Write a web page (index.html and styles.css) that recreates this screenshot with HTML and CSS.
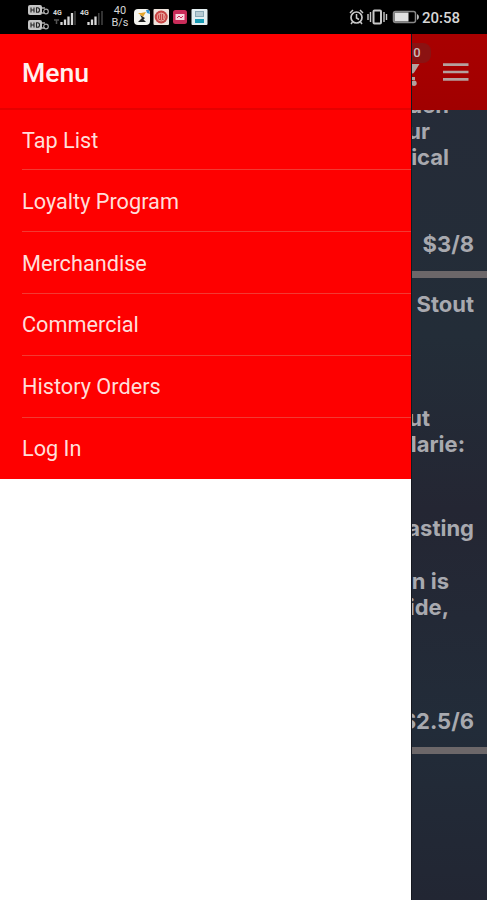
FILE: index.html
```
<!DOCTYPE html>
<html lang="en">
<head>
    <meta charset="UTF-8">
    <meta name="viewport" content="width=device-width, initial-scale=1.0">
    <title>Menu</title>
    <link rel="stylesheet" href="styles.css">
</head>
<body>
    <div class="status-bar">
        <div class="hd-icons">
            <svg width="21" height="10" viewBox="0 0 21 10">
                <rect x="0" y="0" width="14" height="10" rx="2" fill="#c4c4c4"/>
                <path d="M3 2.5v5M6 2.5v5M3 5h3M8.5 2.7h1q2 0 2 2.3t-2 2.3h-1z" stroke="#222" stroke-width="1.1" fill="none"/>
                <path d="M14 3h3M14 8h3" stroke="#aaa" stroke-width="1.5"/>
                <circle cx="18" cy="6.5" r="2.3" stroke="#aaa" stroke-width="1.2" fill="none"/>
            </svg>
            <svg width="21" height="10" viewBox="0 0 21 10">
                <rect x="0" y="0" width="14" height="10" rx="2" fill="#c4c4c4"/>
                <path d="M3 2.5v5M6 2.5v5M3 5h3M8.5 2.7h1q2 0 2 2.3t-2 2.3h-1z" stroke="#222" stroke-width="1.1" fill="none"/>
                <path d="M14 3h3M14 8h3" stroke="#aaa" stroke-width="1.5"/>
                <circle cx="18" cy="6.5" r="2.3" stroke="#aaa" stroke-width="1.2" fill="none"/>
            </svg>
        </div>
        <div class="signal">
            <span class="network">4G</span>
            <svg width="23" height="16" viewBox="0 0 23 16">
                <path d="M1 10h5M3.5 10v4" stroke="#555" stroke-width="1.5"/>
                <path d="M8.5 15v-3M12 15V9.5M15.5 15V6.5M19 15V3" stroke="#d8d8d8" stroke-width="2.3"/>
                <path d="M22 15V1" stroke="#444" stroke-width="1.5"/>
            </svg>
        </div>
        <div class="signal">
            <span class="network">4G</span>
            <svg width="23" height="16" viewBox="0 0 23 16">
                <path d="M8.5 15v-3M12 15V9.5M15.5 15V6.5" stroke="#d8d8d8" stroke-width="2.3"/>
                <path d="M18.8 15V3M22 15V1" stroke="#444" stroke-width="1.5"/>
            </svg>
        </div>
        <div class="speed"><span>40</span><span>B/s</span></div>
        <svg class="apps" width="74" height="16" viewBox="0 0 74 16">
            <rect x="0" y="0" width="16" height="16" rx="4" fill="#f5f5f0"/>
            <path d="M4 4l5 4 3-5-5 1z" fill="#e3a52c"/>
            <path d="M12 1h3l1 4-3-1z" fill="#2e91d2"/>
            <path d="M4 13l4-4 4 4zM6 6l5 3-2 2z" fill="#222"/>
            <rect x="19.5" y="0" width="15.5" height="16" rx="1" fill="#efe4dc"/>
            <circle cx="27.2" cy="8" r="6.5" fill="#c74444"/>
            <circle cx="27.2" cy="8" r="4" fill="none" stroke="#eba79e"/>
            <path d="M25.5 5v5M27.5 4v7M29.5 5v5" stroke="#eba79e" stroke-width=".8"/>
            <rect x="39" y="1" width="14" height="14" rx="2.5" fill="#c82c59"/>
            <path d="M41.5 5h9v6h-9z" fill="#f6d7df"/>
            <path d="M43 9l2-2 2 2 2-2" stroke="#c82c59" fill="none"/>
            <rect x="57.5" y="0" width="16" height="16" rx="1" fill="#e4eff1"/>
            <path d="M61 2h9v6h-9z" fill="#8aa8b5"/>
            <path d="M62 4h7M62 6h7" stroke="#e4eff1"/>
            <path d="M61 10h9v4h-9z" fill="#189bb4"/>
        </svg>
        <svg class="system-icons" width="72" height="18" viewBox="0 0 72 18">
            <g fill="none" stroke="#c9c9c9">
                <circle cx="7.5" cy="9.5" r="5.5" stroke-width="1.7"/>
                <path d="M7.5 6v4l2.5 1.500M1 5l3-3M14 5l-3-3M3.5 14l-1.5 2M11.5 14l1.5 2" stroke-width="1.5"/>
                <rect x="24.5" y="2.5" width="7.5" height="13" rx="1" stroke-width="2"/>
                <path d="M21.5 4v10M35 4v10M19 6v6M37.5 6v6" stroke-width="1.4"/>
                <rect x="44.5" y="3.5" width="22" height="11" rx="2" stroke="#888" stroke-width="1.5"/>
            </g>
            <rect x="45.5" y="4.5" width="14" height="9" fill="#e0e0e0"/>
            <path d="M68 6q2 1 2 3t-2 3z" fill="#bbb"/>
        </svg>
        <span class="clock">20:58</span>
    </div>

    <div class="screen">
        <nav class="drawer">
            <div class="drawer-header">Menu</div>
            <ul class="menu-list">
                <li>Tap List</li>
                <li>Loyalty Program</li>
                <li>Merchandise</li>
                <li>Commercial</li>
                <li>History Orders</li>
                <li>Log In</li>
            </ul>
        </nav>

        <main class="page">
            <div class="toolbar">
                <div class="cart">
                    <svg width="28" height="28" viewBox="0 0 28 28" fill="#b5a09e">
                        <path d="M2 3h4l1.5 3h20l-5 8q-.8 1.500-2.500 1.500H9.5L8 19h15v3H7q-3 0-2-3l2-3.500L3.5 6H2z"/>
                        <circle cx="9" cy="25.200" r="2.700"/>
                        <circle cx="22" cy="25.200" r="2.700"/>
                    </svg>
                    <span class="badge">0</span>
                </div>
                <svg class="burger" width="26" height="18" viewBox="0 0 26 18">
                    <path d="M0 1.7h25.500M0 9h25.500M0 16.3h25.500" stroke="#b5a09e" stroke-width="2.700"/>
                </svg>
            </div>
            <div class="content">
                <section class="beer beer-top">
                    <p class="indent-md">den</p>
                    <p class="indent-lg">ur</p>
                    <p class="indent-md">ical</p>
                    <p class="price">$3/8</p>
                </section>
                <section class="beer beer-stout">
                    <p class="style">Stout</p>
                    <p class="indent-lg">ut</p>
                    <p class="indent-xs">Marie:</p>
                    <p class="tasting">asting</p>
                    <p class="indent-md">n is</p>
                    <p class="indent-md">ide,</p>
                    <p class="price">$2.5/6</p>
                </section>
            </div>
        </main>
    </div>
</body>
</html>
```

FILE: styles.css
```
* {
    box-sizing: border-box;
}

body {
    margin: 0;
    height: 900px;
    display: flex;
    flex-direction: column;
    overflow: hidden;
    font-family: Roboto, sans-serif;
    background: #232834;
}

svg {
    flex-shrink: 0;
}

.status-bar {
    height: 34px;
    flex-shrink: 0;
    display: flex;
    align-items: center;
    padding-left: 28px;
    background: #000;
    color: #d6d6d6;
}

.hd-icons {
    display: flex;
    flex-direction: column;
    gap: 5px;
}

.signal {
    display: flex;
    flex-direction: column;
    margin-left: 4px;
    width: 23px;
}

.signal svg {
    margin-top: -7px;
}

.network {
    font-size: 7px;
    line-height: 8px;
    font-weight: 700;
}

.speed {
    display: flex;
    flex-direction: column;
    align-items: center;
    width: 18px;
    margin-left: 8px;
    font-size: 11px;
    line-height: 12px;
}

.apps {
    margin-left: 5px;
}

.system-icons {
    margin-left: auto;
}

.clock {
    width: 38px;
    margin: 1px 27px 0 1px;
    font-size: 15px;
    font-weight: 500;
    white-space: nowrap;
}

.screen {
    flex: 1;
    display: flex;
    min-height: 0;
}

.drawer {
    width: 411px;
    flex-shrink: 0;
    background: #fff;
}

.drawer-header {
    height: 76px;
    padding: 3px 22px 0;
    display: flex;
    align-items: center;
    background: #fe0000;
    border-bottom: 2px solid #e50000;
    color: #fff0ee;
    font-size: 26.6px;
    font-weight: 500;
}

.menu-list {
    list-style: none;
    margin: 0;
    padding: 0 0 0 22px;
    background: #fe0000;
}

.menu-list li {
    height: 61.8px;
    display: flex;
    align-items: center;
    padding-top: 1px;
    border-bottom: 1px solid #f23a32;
    color: #ffdeda;
    font-size: 21.7px;
}

.menu-list li:first-child {
    height: 60.4px;
}

.menu-list li:last-child {
    height: 61.4px;
    padding-top: 0;
    border-bottom: none;
}

.page {
    flex: 1;
    min-width: 0;
    display: flex;
    flex-direction: column;
    overflow: hidden;
    border-left: 1px solid #151820;
    background: linear-gradient(#262b38, #232d38 35%, #242633 55%, #222c39 80%, #222633);
}

.toolbar {
    height: 76px;
    flex-shrink: 0;
    display: flex;
    align-items: center;
    justify-content: flex-end;
    padding-right: 18px;
    background: linear-gradient(#a90000, #a00000);
}

.cart {
    position: relative;
    flex-shrink: 0;
    height: 28px;
    margin-right: 23px;
}

.badge {
    position: absolute;
    top: -15px;
    right: -11px;
    width: 28px;
    height: 20px;
    border-radius: 8px;
    background: #8b1212;
    color: #c9b9b8;
    font-size: 13px;
    font-weight: 500;
    line-height: 20px;
    text-align: center;
}

.content {
    flex: 1;
    overflow: hidden;
}

.beer {
    display: flow-root;
    border-bottom: 7px solid #6c6769;
    color: #a8a9af;
    font-family: Inter, sans-serif;
    font-size: 22px;
    font-weight: 700;
    line-height: 26px;
}

/* lines are anchored to the right and run under the drawer */
.beer p {
    margin: 0;
    display: flex;
    justify-content: flex-end;
    padding-right: 13px;
    white-space: nowrap;
}

.beer .indent-xs {
    padding-right: 22px;
}

.beer .indent-md {
    padding-right: 38px;
}

.beer .indent-lg {
    padding-right: 57px;
}

.beer-top {
    height: 168px;
}

.beer-top p:first-child {
    margin-top: -18px;
}

.beer-top .price {
    margin-top: 61px;
}

.beer-stout {
    height: 476px;
    padding-top: 13px;
}

.beer-stout .style {
    margin-bottom: 88px;
}

.beer-stout .tasting {
    margin: 58px 0 27px;
}

.beer-stout .price {
    margin-top: 88px;
}
```
